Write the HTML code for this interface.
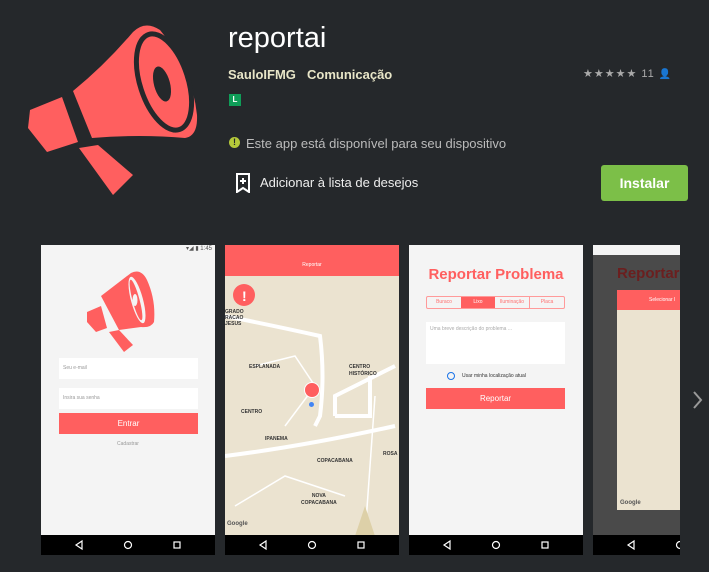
<!DOCTYPE html>
<html><head><meta charset="utf-8"><style>
body{margin:0;width:709px;height:572px;background:#25282b;font-family:"Liberation Sans",sans-serif;overflow:hidden;position:relative;color:#fff}
.a{position:absolute}
.shot{position:absolute;top:245px;width:174px;height:310px;background:#f4f4f4;overflow:hidden}
.nav{position:absolute;left:0;bottom:0;width:174px;height:20px;background:#000}
.sb{position:absolute;top:0;left:0;width:100%;height:10px;font-size:6px;color:#555}
</style></head><body>
<svg class="a" style="left:0;top:0" width="220" height="230" viewBox="0 0 220 230">
<path d="M73 91 Q105 65 133 32 Q145 20 160 30 Q192 68 197 115 Q198 136 185 138 Q140 134 92 138 Z" fill="#ff5f5f"/>
<ellipse cx="164" cy="82" rx="24" ry="50" transform="rotate(-18 164 82)" fill="none" stroke="#25282b" stroke-width="5"/>
<ellipse cx="162" cy="84" rx="8" ry="18" transform="rotate(-15 162 84)" fill="#25282b"/>
<path d="M30 110 L62 97 L78 142 L47 152 L28 128 Z" fill="#ff5f5f"/>
<path d="M79 148 L98 145 L133 175 L113 195 Z" fill="#ff5f5f"/>
</svg>
<div class="a" style="left:228px;top:22px;font-size:29px;color:#fff">reportai</div>
<div class="a" style="left:228px;top:67px;font-size:13px;font-weight:bold;color:#e8e6c8">SauloIFMG</div>
<div class="a" style="left:307px;top:67px;font-size:13px;font-weight:bold;color:#e8e6c8">Comunicação</div>
<div class="a" style="left:583px;top:67px;font-size:11px;color:#aaa;letter-spacing:1px">★★★★★ 11 <span style="font-size:10px">👤</span></div>
<div class="a" style="left:229px;top:94px;width:12px;height:12px;background:#0f9d58;color:#fff;font-size:8px;font-weight:bold;text-align:center;line-height:12px">L</div>
<div class="a" style="left:229px;top:137px;width:11px;height:11px;border-radius:50%;background:#b5c93a;color:#25282b;font-size:9px;font-weight:bold;text-align:center;line-height:11px">!</div>
<div class="a" style="left:246px;top:136px;font-size:13px;color:#bbb">Este app está disponível para seu dispositivo</div>
<svg class="a" style="left:236px;top:173px" width="14" height="20"><path d="M1 1H13V19L7 15L1 19Z" fill="none" stroke="#fff" stroke-width="2"/><path d="M7 5V11M4 8H10" stroke="#fff" stroke-width="2"/></svg>
<div class="a" style="left:260px;top:175px;font-size:13px;color:#eee">Adicionar à lista de desejos</div>
<div class="a" style="left:601px;top:165px;width:87px;height:36px;background:#7cbf48;border-radius:3px;color:#fff;font-size:14px;font-weight:bold;text-align:center;line-height:36px">Instalar</div>

<div class="shot" style="left:41px">
<div class="sb" style="text-align:right;padding-right:3px;box-sizing:border-box">▾◢ ▮ 1:45</div>
<svg class="a" style="left:40px;top:20px" width="100" height="90" viewBox="40 25 100 90"><path d="M60 56 L90 33 Q100 28 106 40 Q115 60 113 82 Q110 88 100 87 L78 90 Z" fill="#ff5f5f"/><ellipse cx="96" cy="60" rx="6" ry="24" transform="rotate(-15 96 60)" fill="#f4f4f4"/><ellipse cx="95" cy="60" rx="3.5" ry="21" transform="rotate(-15 95 60)" fill="#ff5f5f"/><ellipse cx="94" cy="60" rx="2.5" ry="6" fill="#f4f4f4"/><path d="M46 72 L60 66 L66 88 L55 92 L46 82 Z" fill="#ff5f5f"/><path d="M68 92 L78 90 L92 105 L83 112 Z" fill="#ff5f5f"/></svg>
<div class="a" style="left:18px;top:113px;width:139px;height:21px;background:#fff;font-size:5px;color:#999;line-height:21px;padding-left:4px;box-sizing:border-box">Seu e-mail</div>
<div class="a" style="left:18px;top:143px;width:139px;height:21px;background:#fff;font-size:5px;color:#999;line-height:21px;padding-left:4px;box-sizing:border-box">Insira sua senha</div>
<div class="a" style="left:18px;top:168px;width:139px;height:21px;background:#ff5f5f;font-size:8px;color:#fff;line-height:21px;text-align:center">Entrar</div>
<div class="a" style="left:0;top:196px;width:174px;font-size:5px;color:#999;text-align:center">Cadastrar</div>
<svg class="nav"><path d="M41 6L35 10L41 14Z" fill="none" stroke="#fff" stroke-width="1.2"/><circle cx="87" cy="10" r="3.5" fill="none" stroke="#fff" stroke-width="1.2"/><rect x="133" y="7" width="6" height="6" fill="none" stroke="#fff" stroke-width="1.2"/></svg></div>

<div class="shot" style="left:225px;background:#ebe3d0">
<div class="a" style="left:0;top:0;width:174px;height:31px;background:#ff5f5f"></div>
<div class="a" style="left:0;top:17px;width:174px;font-size:5px;text-align:center">Reportar</div>
<svg class="a" style="left:0;top:31px" width="174" height="260"><g stroke="#fff" stroke-width="4" fill="none"><path d="M0 40 Q50 50 95 60 Q100 100 95 140 L90 150"/><path d="M110 140 L110 120 L170 90"/><path d="M110 140 L145 140 L145 100"/><path d="M0 180 Q80 170 170 150"/></g><g stroke="#fff" stroke-width="1.5" fill="none"><path d="M30 90 L70 80 L90 110 L60 150"/><path d="M150 120 L140 260"/><path d="M10 230 L60 200 L120 220"/></g><path d="M140 230 L130 260 L150 260 Z" fill="#ddd0a8"/><circle cx="19" cy="19" r="11" fill="#ff5f5f"/></svg>
<div class="a" style="left:17px;top:43px;color:#fff;font-size:14px;font-weight:bold">!</div>
<div class="a" style="left:0;top:64px;font-size:5px;color:#333;font-weight:bold;line-height:6px">GRADO<br>RACAO<br>JESUS</div>
<div class="a" style="left:24px;top:119px;font-size:5px;color:#333;font-weight:bold">ESPLANADA</div>
<div class="a" style="left:124px;top:119px;font-size:5px;color:#333;font-weight:bold;line-height:7px">CENTRO<br>HISTÓRICO</div>
<div class="a" style="left:16px;top:164px;font-size:5px;color:#333;font-weight:bold">CENTRO</div>
<div class="a" style="left:40px;top:191px;font-size:5px;color:#333;font-weight:bold">IPANEMA</div>
<div class="a" style="left:92px;top:213px;font-size:5px;color:#333;font-weight:bold">COPACABANA</div>
<div class="a" style="left:158px;top:206px;font-size:5px;color:#333;font-weight:bold">ROSA</div>
<div class="a" style="left:76px;top:248px;font-size:5px;color:#333;font-weight:bold;text-align:center;line-height:7px">NOVA<br>COPACABANA</div>
<div class="a" style="left:79px;top:137px;width:14px;height:14px;border-radius:50%;background:#ff5f5f;border:1px solid #fff"></div>
<div class="a" style="left:84px;top:157px;width:5px;height:5px;border-radius:50%;background:#4285f4"></div>
<div class="a" style="left:2px;top:276px;font-size:6px;color:#555;font-weight:bold">Google</div>
<svg class="nav"><path d="M41 6L35 10L41 14Z" fill="none" stroke="#fff" stroke-width="1.2"/><circle cx="87" cy="10" r="3.5" fill="none" stroke="#fff" stroke-width="1.2"/><rect x="133" y="7" width="6" height="6" fill="none" stroke="#fff" stroke-width="1.2"/></svg></div>

<div class="shot" style="left:409px">
<div class="a" style="left:0;top:21px;width:174px;font-size:15px;color:#ff5f5f;text-align:center;font-weight:bold">Reportar Problema</div>
<div class="a" style="left:17px;top:51px;width:139px;height:13px;border:1px solid #ff9a9a;border-radius:2px;display:flex;font-size:5px;color:#ff7070;box-sizing:border-box">
<div style="flex:1;text-align:center;line-height:11px">Buraco</div><div style="flex:1;text-align:center;line-height:11px;background:#ff5f5f;color:#fff">Lixo</div><div style="flex:1;text-align:center;line-height:11px;border-right:1px solid #ff9a9a">Iluminação</div><div style="flex:1;text-align:center;line-height:11px">Placa</div></div>
<div class="a" style="left:17px;top:77px;width:139px;height:42px;background:#fff;font-size:5px;color:#aaa;padding:4px;box-sizing:border-box">Uma breve descrição do problema ...</div>
<div class="a" style="left:38px;top:127px;width:8px;height:8px;border-radius:50%;border:1.5px solid #1a73e8;box-sizing:border-box"></div>
<div class="a" style="left:53px;top:128px;font-size:5px;color:#333">Usar minha localização atual</div>
<div class="a" style="left:17px;top:143px;width:139px;height:21px;background:#ff5f5f;font-size:8px;color:#fff;line-height:21px;text-align:center">Reportar</div>
<svg class="nav"><path d="M41 6L35 10L41 14Z" fill="none" stroke="#fff" stroke-width="1.2"/><circle cx="87" cy="10" r="3.5" fill="none" stroke="#fff" stroke-width="1.2"/><rect x="133" y="7" width="6" height="6" fill="none" stroke="#fff" stroke-width="1.2"/></svg></div>

<div class="shot" style="left:593px;width:87px;background:#4a4a4a">
<div class="a" style="left:0;top:0;width:87px;height:10px;background:#f4f4f4"></div>
<div class="a" style="left:24px;top:20px;font-size:15px;color:#6b1f1f;font-weight:bold">Reportar</div>
<div class="a" style="left:24px;top:45px;width:63px;height:220px;background:#ebe3d0"></div>
<div class="a" style="left:24px;top:45px;width:63px;height:20px;background:#ff5f5f;font-size:5px;line-height:20px;padding-left:32px;box-sizing:border-box;white-space:nowrap">Selecionar l</div>
<div class="a" style="left:27px;top:255px;font-size:6px;color:#555;font-weight:bold">Google</div>
<svg class="nav"><path d="M41 6L35 10L41 14Z" fill="none" stroke="#fff" stroke-width="1.2"/><circle cx="87" cy="10" r="3.5" fill="none" stroke="#fff" stroke-width="1.2"/></svg></div>

<svg class="a" style="left:692px;top:390px" width="12" height="20"><path d="M2 2L9 10L2 18" stroke="#999" stroke-width="2" fill="none"/></svg>
</body></html>
